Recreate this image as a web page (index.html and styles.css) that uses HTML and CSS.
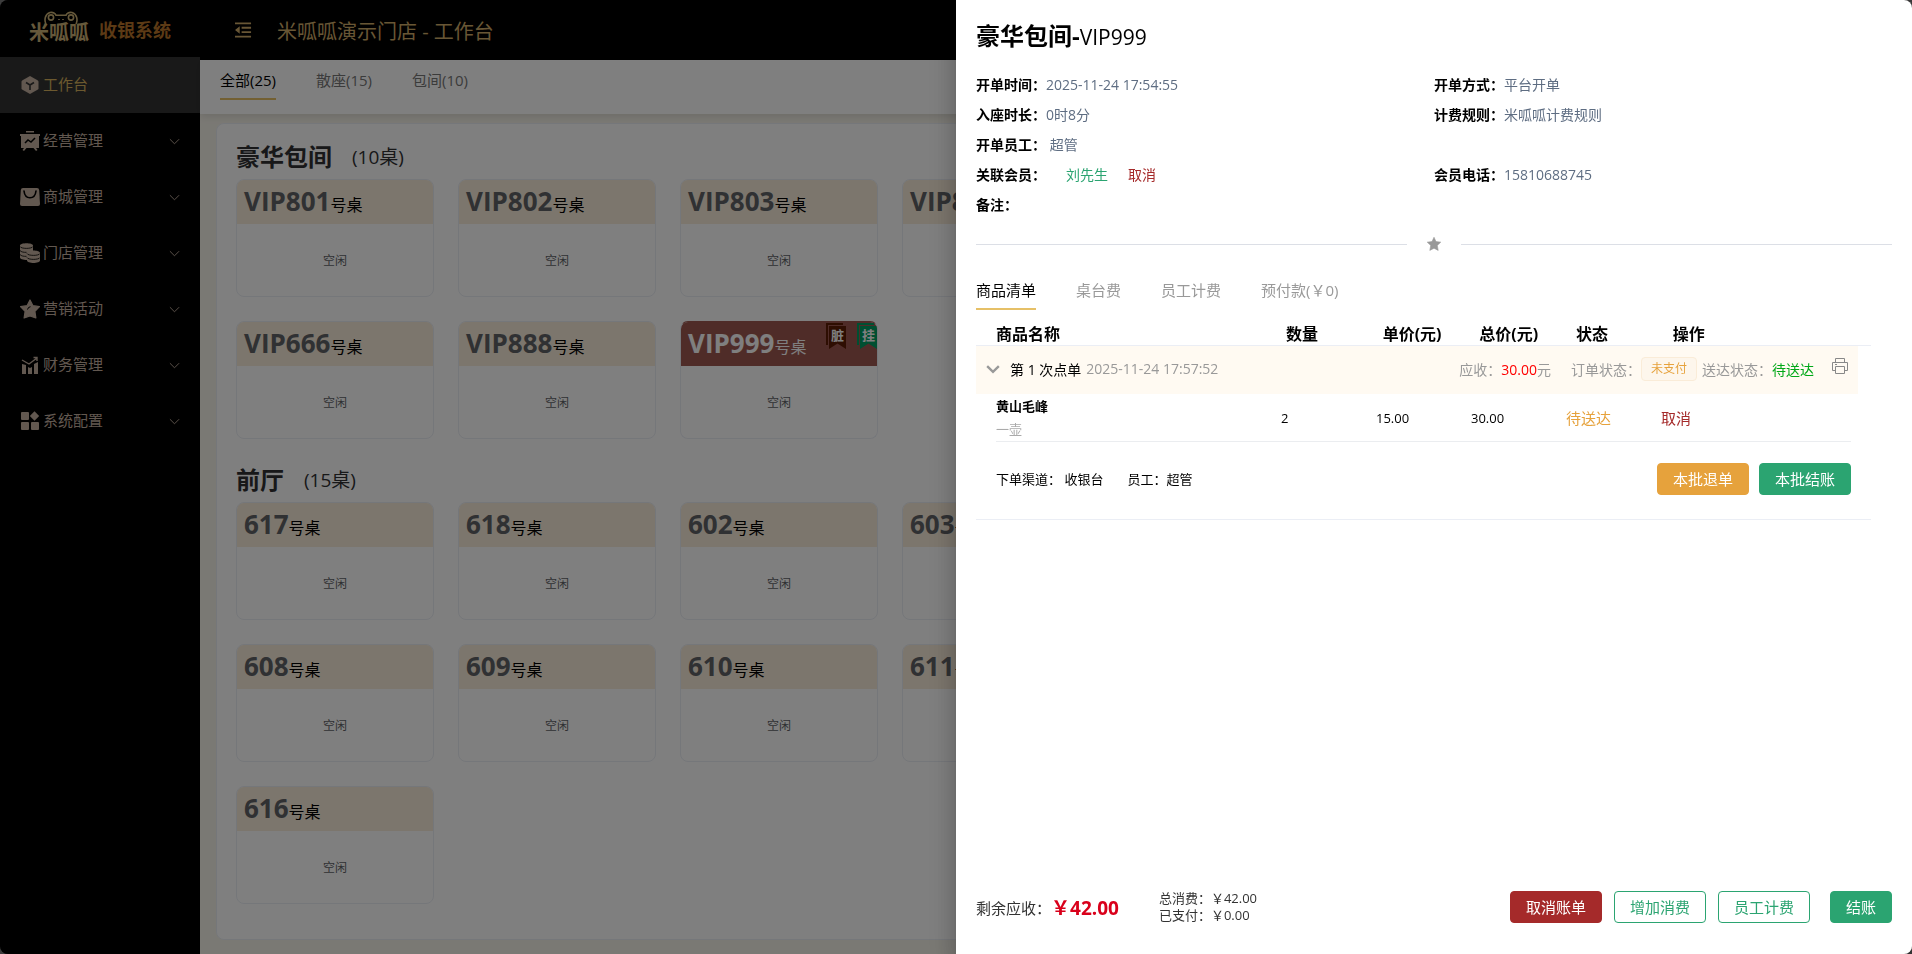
FILE: index.html
```
<!doctype html>
<html lang="zh-CN">

<head>
    <meta charset="UTF-8">
    <title>米呱呱收银系统 - 工作台</title>
    <link rel="stylesheet" href="styles.css">
</head>

<body>

    <svg class="sprite" aria-hidden="true">
        <symbol id="i-down" viewBox="0 0 12 12"><path d="M1 3.5l5 5 5-5" fill="none" stroke="currentColor"/></symbol>
        <symbol id="i-star" viewBox="0 0 12 12"><path d="M6 .2l1.7 3.7 4.1.5-3 2.8.8 4.3L6 9.6l-3.6 1.9.8-4.3-3-2.8 4.1-.5z" fill="currentColor" stroke="currentColor" stroke-width=".5" stroke-linejoin="round"/></symbol>
    </svg>

    <div class="app">

        <aside class="sidebar">
            <div class="logo">
                <span class="logo-mark">米呱呱
                    <svg class="frog" viewBox="0 0 34 14" fill="none" stroke="currentColor" stroke-width="1.6">
                        <path d="M2 13C0 9 1 3 6 1.600c3-.8 5.500 1 6 2.600h10c.5-1.600 3-3.400 6-2.600 5 1.400 6 7.400 4 11.400"/>
                        <circle cx="7" cy="6.500" r="2.600"/>
                        <circle cx="27" cy="6.500" r="2.600"/>
                        <path d="M15 8v1M19 8v1"/>
                    </svg>
                </span>
                <span class="logo-name">收银系统</span>
            </div>

            <nav class="menu">
                <a href="#" class="menu-item active">
                    <svg viewBox="0 0 20 20"><path d="M10 1l7.500 4.200q1 .6 1 1.600v6.400q0 1-1 1.600L10 19l-7.500-4.200q-1-.6-1-1.600V6.800q0-1 1-1.600z" fill="currentColor"/><path d="M6 7.500l4 2.500 4-2.500M10 10v5" fill="none" stroke="#333" stroke-width="1.600"/></svg>
                    <span>工作台</span>
                </a>
                <a href="#" class="menu-item">
                    <svg viewBox="0 0 20 20"><path d="M6 0h8v1.500H6zM0 3h20v2h-1v12h-3l1.500 2-1.500 1-2.500-3h-7L4 20l-1.500-1L4 17H1V5H0z" fill="currentColor"/><path d="M5 12l3-3 3 2 4-4" fill="none" stroke="#000" stroke-width="1.500"/></svg>
                    <span>经营管理</span>
                    <svg class="arrow"><use href="#i-down"/></svg>
                </a>
                <a href="#" class="menu-item">
                    <svg viewBox="0 0 20 20"><path d="M3 1h14q2 0 2.200 2L20 17q0 2-2 2H2q-2 0-2-2L.8 3Q1 1 3 1z" fill="currentColor"/><path d="M4 4c1 9 11 9 12 0" fill="none" stroke="#000" stroke-width="1.600" stroke-linecap="round"/></svg>
                    <span>商城管理</span>
                    <svg class="arrow"><use href="#i-down"/></svg>
                </a>
                <a href="#" class="menu-item">
                    <svg viewBox="0 0 20 20"><path d="M0 2.500C0-.5 13-.5 13 2.500V8l-6 3v6c-4 0-7-1-7-2.500z" fill="currentColor"/><path d="M0 3.500c1 2.500 12 2.500 13 0M0 7.500c1 1.500 4 2 6.500 1.800M0 11.500c1 1.500 4 2 6.500 1.800" fill="none" stroke="#000" stroke-width=".8"/><path d="M7 10c0-3.500 13-3.500 13 0v7.500c0 3.300-13 3.300-13 0z" fill="currentColor"/><path d="M7 10.500c1 2.500 12 2.500 13 0M7 14.500c1 2.500 12 2.500 13 0" fill="none" stroke="#000" stroke-width=".8"/></svg>
                    <span>门店管理</span>
                    <svg class="arrow"><use href="#i-down"/></svg>
                </a>
                <a href="#" class="menu-item">
                    <svg viewBox="0 0 20 20"><path d="M10 1l3 5.700 6.500 1-4.600 4.700 1 6.600L10 17l-5.900 2 1-6.600L.5 7.700l6.500-1z" fill="currentColor" stroke="currentColor" stroke-width="1.200" stroke-linejoin="round"/><path d="M7.500 10.500q.5-2.500 3-2.800" fill="none" stroke="#000"/></svg>
                    <span>营销活动</span>
                    <svg class="arrow"><use href="#i-down"/></svg>
                </a>
                <a href="#" class="menu-item">
                    <svg viewBox="0 0 20 20"><path d="M2 9l4 1v9H2zM8 12l2 1 2-1v7H8zM14 9l4-2v12h-4z" fill="currentColor"/><path d="M2 5l7 4 8-6M13.500 2.500H17V6" fill="none" stroke="currentColor" stroke-width="1.400"/></svg>
                    <span>财务管理</span>
                    <svg class="arrow"><use href="#i-down"/></svg>
                </a>
                <a href="#" class="menu-item">
                    <svg viewBox="0 0 20 20" fill="currentColor"><rect x="1" y="1" width="8" height="8" rx="1"/><rect x="1" y="11" width="8" height="8" rx="1"/><rect x="11" y="11" width="8" height="8" rx="1"/><path d="M14.500.3l4.700 4.700-4.700 4.700L9.800 5z"/></svg>
                    <span>系统配置</span>
                    <svg class="arrow"><use href="#i-down"/></svg>
                </a>
            </nav>
        </aside>

        <div class="main">

            <header class="topbar">
                <svg class="fold" viewBox="0 0 18 18" fill="currentColor"><path d="M0 1h17v2H0zM7 5.600h10v2H7zM7 10.200h10v2H7zM0 15h17v2H0zM5 5v8L0 9z"/></svg>
                <span>米呱呱演示门店 - 工作台</span>
            </header>

            <nav class="tabs room-tabs">
                <a href="#" class="active">全部(25)</a>
                <a href="#">散座(15)</a>
                <a href="#">包间(10)</a>
            </nav>

            <div class="board">

                <section>
                    <h2>豪华包间 <small>(10桌)</small></h2>
                    <div class="desks">
                        <div class="desk"><div class="desk-head"><b>VIP801</b>号桌</div><div class="desk-body">空闲</div></div>
                        <div class="desk"><div class="desk-head"><b>VIP802</b>号桌</div><div class="desk-body">空闲</div></div>
                        <div class="desk"><div class="desk-head"><b>VIP803</b>号桌</div><div class="desk-body">空闲</div></div>
                        <div class="desk"><div class="desk-head"><b>VIP804</b>号桌</div><div class="desk-body">空闲</div></div>
                        <div class="desk"><div class="desk-head"><b>VIP666</b>号桌</div><div class="desk-body">空闲</div></div>
                        <div class="desk"><div class="desk-head"><b>VIP888</b>号桌</div><div class="desk-body">空闲</div></div>
                        <div class="desk busy">
                            <div class="desk-head"><b>VIP999</b>号桌</div>
                            <div class="desk-body">空闲</div>
                            <div class="flags">
                                <span class="flag dirty">脏</span>
                                <span class="flag hold">挂</span>
                            </div>
                        </div>
                    </div>
                </section>

                <section>
                    <h2>前厅 <small>(15桌)</small></h2>
                    <div class="desks">
                        <div class="desk"><div class="desk-head"><b>617</b>号桌</div><div class="desk-body">空闲</div></div>
                        <div class="desk"><div class="desk-head"><b>618</b>号桌</div><div class="desk-body">空闲</div></div>
                        <div class="desk"><div class="desk-head"><b>602</b>号桌</div><div class="desk-body">空闲</div></div>
                        <div class="desk"><div class="desk-head"><b>603</b>号桌</div><div class="desk-body">空闲</div></div>
                        <div class="desk"><div class="desk-head"><b>608</b>号桌</div><div class="desk-body">空闲</div></div>
                        <div class="desk"><div class="desk-head"><b>609</b>号桌</div><div class="desk-body">空闲</div></div>
                        <div class="desk"><div class="desk-head"><b>610</b>号桌</div><div class="desk-body">空闲</div></div>
                        <div class="desk"><div class="desk-head"><b>611</b>号桌</div><div class="desk-body">空闲</div></div>
                        <div class="desk"><div class="desk-head"><b>616</b>号桌</div><div class="desk-body">空闲</div></div>
                    </div>
                </section>

            </div>
        </div>
    </div>

    <div class="mask"></div>

    <div class="drawer" role="dialog" aria-labelledby="drawer-title">

        <h1 id="drawer-title">豪华包间-<span>VIP999</span></h1>

        <dl class="info">
            <div><dt>开单时间：</dt><dd>2025-11-24 17:54:55</dd></div>
            <div><dt>开单方式：</dt><dd>平台开单</dd></div>
            <div><dt>入座时长：</dt><dd>0时8分</dd></div>
            <div><dt>计费规则：</dt><dd>米呱呱计费规则</dd></div>
            <div class="wide"><dt>开单员工：</dt><dd>&nbsp;超管</dd></div>
            <div><dt>关联会员：</dt><dd class="member"><a href="#" class="green">刘先生</a><a href="#" class="red">取消</a></dd></div>
            <div><dt>会员电话：</dt><dd>15810688745</dd></div>
            <div class="wide"><dt>备注：</dt><dd></dd></div>
        </dl>

        <div class="divider"><svg><use href="#i-star"/></svg></div>

        <nav class="tabs bill-tabs">
            <a href="#" class="active">商品清单</a>
            <a href="#">桌台费</a>
            <a href="#">员工计费</a>
            <a href="#">预付款(￥0)</a>
        </nav>

        <table class="goods">
            <thead>
                <tr><th>商品名称</th><th>数量</th><th>单价(元)</th><th>总价(元)</th><th>状态</th><th>操作</th></tr>
            </thead>
            <tbody>
                <tr class="batch">
                    <td colspan="6">
                        <svg class="arrow"><use href="#i-down"/></svg>
                        <span class="batch-no">第 1 次点单</span>
                        <span class="batch-time">2025-11-24 17:57:52</span>
                        <span class="batch-due">应收：<em>30.00</em>元</span>
                        <span>订单状态：</span>
                        <span class="tag">未支付</span>
                        <span>送达状态：</span>
                        <span class="sent">待送达</span>
                        <button type="button" class="print" aria-label="打印">
                            <svg viewBox="0 0 16 16" fill="none" stroke="currentColor"><path d="M3.500 4.500v-4h9v4M3.500 12.500h-3v-8h15v8h-3M3.500 8.500h9v7h-9zM3 6.500h2"/></svg>
                        </button>
                    </td>
                </tr>
                <tr class="item">
                    <td><b>黄山毛峰</b><small>一壶</small></td>
                    <td>2</td>
                    <td>15.00</td>
                    <td>30.00</td>
                    <td class="state">待送达</td>
                    <td class="act"><a href="#" class="red">取消</a></td>
                </tr>
            </tbody>
            <tfoot>
                <tr>
                    <td colspan="6">
                        <span>下单渠道：&nbsp;收银台</span>
                        <span>员工：超管</span>
                        <div class="batch-btns">
                            <button type="button" class="btn btn-orange">本批退单</button>
                            <button type="button" class="btn btn-green">本批结账</button>
                        </div>
                    </td>
                </tr>
            </tfoot>
        </table>

        <footer class="pay">
            <span class="rest">剩余应收：</span>
            <strong>￥42.00</strong>
            <div class="sums">
                <div>总消费：￥42.00</div>
                <div>已支付：￥0.00</div>
            </div>
            <div class="pay-btns">
                <button type="button" class="btn btn-red">取消账单</button>
                <button type="button" class="btn btn-line">增加消费</button>
                <button type="button" class="btn btn-line">员工计费</button>
                <button type="button" class="btn btn-green checkout">结账</button>
            </div>
        </footer>

    </div>

</body>

</html>
```
FILE: styles.css
```
* {
    box-sizing: border-box;
}

html {
    background: #3c3c3c;
}

body {
    margin: 0;
    font-family: "Open Sans", "Noto Sans CJK SC", sans-serif;
    font-size: 14px;
    color: #000;
}

a {
    color: inherit;
    text-decoration: none;
}

h1, h2, dl, dd {
    margin: 0;
}

.sprite {
    display: none;
}

.green { color: #2ba471; }
.red { color: #a52a2a; }

/* page */
.app {
    display: flex;
    min-height: 100vh;
    border-radius: 8px;
    overflow: hidden;
}

.sidebar {
    flex: none;
    width: 200px;
    background: #000;
}

.logo {
    display: flex;
    align-items: center;
    gap: 10px;
    height: 57px;
    padding-left: 29px;
}

.logo-mark {
    position: relative;
    padding-top: 8px;
    font-size: 20px;
    line-height: 24px;
    font-weight: bold;
    color: #cdb377;
}

.frog {
    position: absolute;
    top: -2px;
    left: 15px;
    width: 34px;
    height: 14px;
}

.logo-name {
    font-size: 18px;
    font-weight: bold;
    color: #b8742a;
}

.menu-item {
    display: flex;
    align-items: center;
    gap: 3px;
    height: 56px;
    padding: 0 20px;
    font-size: 15px;
    line-height: 20px;
    color: #c4b0a0;
}

.menu-item span {
    padding-bottom: 2px;
}

.menu-item svg {
    width: 20px;
    height: 20px;
}

.menu-item.active {
    background: #333;
}

.menu-item.active span {
    color: #d9b25e;
}

.menu-item .arrow {
    width: 11px;
    height: 11px;
    margin-left: auto;
}

.main {
    flex: 1;
    min-width: 0;
    display: flex;
    flex-direction: column;
    background: #f5f2e9;
}

.topbar {
    display: flex;
    align-items: center;
    gap: 25px;
    height: 60px;
    padding-left: 35px;
    background: #000;
    font-size: 20px;
    color: #d0ac6a;
}

.fold {
    width: 17px;
    height: 18px;
}

.tabs {
    display: flex;
    gap: 40px;
    font-size: 15px;
    line-height: 20px;
}

.tabs a {
    border-bottom: 2px solid transparent;
}

.tabs .active {
    border-color: #e6c067;
    color: #000;
}

.room-tabs {
    height: 54px;
    padding: 10px 20px 0;
    background: #fff;
    box-shadow: 0 2px 8px rgba(0, 0, 0, .12);
    color: #777;
}

.room-tabs a {
    height: 30px;
}

.board {
    flex: 1;
    margin: 9px 16px 14px;
    padding: 10px 19px 30px;
    border: 1px solid #ebeef5;
    border-radius: 8px;
    background: #fff;
    overflow: hidden;
}

.board section + section {
    margin-top: 18px;
}

.board h2 {
    display: flex;
    align-items: center;
    gap: 20px;
    height: 45px;
    padding-bottom: 2px;
    font-size: 24px;
    color: #303133;
}

.board h2 small {
    font-size: 19px;
    font-weight: normal;
}

.desks {
    display: grid;
    grid-template-columns: repeat(4, 198px);
    gap: 24px;
}

.desk {
    position: relative;
    height: 118px;
    border: 1px solid #ebeef5;
    border-radius: 8px;
    overflow: hidden;
}

.desk-head {
    height: 44px;
    padding-left: 7px;
    background: #f8ecda;
    font-size: 16px;
    line-height: 42px;
}

.desk-head b {
    font-size: 26px;
    color: #606266;
}

.desk-body {
    padding-top: 27px;
    font-size: 12px;
    line-height: 20px;
    text-align: center;
    color: #606266;
}

.desk.busy {
    border-top-color: #9e5850;
}

.busy .desk-head {
    background: #9e5850;
    color: #fff;
}

.busy .desk-head b {
    color: #fff;
}

/* ribbons over the corner of a desk */
.flags {
    position: absolute;
    top: 1px;
    right: 0;
    display: flex;
    gap: 11px;
    z-index: 0;
}

.flag {
    position: relative;
    width: 20px;
    height: 26px;
    padding-left: 3px;
    font-size: 13px;
    line-height: 24px;
    font-weight: bold;
    text-align: center;
    color: #fff;
}

.flag::before {
    content: "";
    position: absolute;
    inset: 3px 0 0 3px;
    z-index: -1;
    background: #5c1c04;
    clip-path: polygon(0 0, 100% 0, 100% 100%, 50% 76%, 0 100%);
}

.flag::after {
    content: "";
    position: absolute;
    inset: 0 3px 4px 0;
    border-top: 2px solid #5c1c04;
    border-left: 2px solid #5c1c04;
}

.hold::before {
    background: #009e62;
}

.hold::after {
    border-color: #009e62;
}

.mask {
    position: fixed;
    inset: 0;
    border-radius: 8px;
    background: rgba(0, 0, 0, .5);
}

/* drawer */
.drawer {
    position: fixed;
    top: 0;
    right: 0;
    bottom: 0;
    width: 50%;
    display: flex;
    flex-direction: column;
    padding: 20px;
    border-radius: 0 8px 8px 0;
    background: #fff;
    box-shadow: 0 8px 10px -5px rgba(0, 0, 0, .2), 0 16px 24px 2px rgba(0, 0, 0, .14), 0 6px 30px 5px rgba(0, 0, 0, .12);
}

.drawer h1 {
    font-size: 24px;
    line-height: 32px;
}

.drawer h1 span {
    font-size: 21px;
    font-weight: normal;
}

.info {
    display: grid;
    grid-template-columns: 1fr 1fr;
    margin-top: 17px;
    line-height: 30px;
}

.info div {
    display: flex;
}

.info .wide {
    grid-column: 1 / 3;
}

.info dt {
    font-weight: bold;
}

.info dd {
    color: #5e6d82;
}

.info .member {
    display: flex;
    gap: 20px;
    padding-left: 20px;
}

.divider {
    display: flex;
    align-items: center;
    gap: 20px;
    height: 24px;
    margin-top: 12px;
    color: #999;
}

.divider::before,
.divider::after {
    content: "";
    flex: 1;
    height: 1px;
    background: #dcdfe6;
}

.divider svg {
    width: 14px;
    height: 14px;
}

.bill-tabs {
    margin-top: 24px;
    color: #999;
}

.bill-tabs a {
    height: 30px;
}

/* goods list, rows share nine equal parts */
.goods {
    display: block;
    margin: 14px 21px 0 0;
    border-bottom: 1px solid #ebeef5;
}

.goods thead,
.goods tbody,
.goods tfoot {
    display: block;
}

.goods tr {
    display: grid;
    grid-template-columns: 3fr repeat(6, 1fr);
}

.goods th,
.goods td {
    padding: 0;
    text-align: left;
}

.goods thead tr {
    padding: 0 5px 0 20px;
    border-bottom: 1px solid #ebeef5;
    font-size: 16px;
    line-height: 21px;
}

.goods .batch,
.goods tfoot tr {
    display: block;
}

.goods .batch td {
    display: flex;
    align-items: center;
    height: 48px;
    margin-right: 13px;
    padding: 0 10px 3px;
    background: #fffaf2;
    color: #999;
}

.batch .arrow {
    width: 14px;
    height: 14px;
    stroke-width: 2;
}

.batch-no {
    margin-left: 10px;
    color: #000;
}

.batch-time {
    margin-left: 5px;
}

.batch-due {
    margin: 0 20px 0 auto;
}

.batch-due em {
    font-style: normal;
    color: #f00;
}

.tag {
    width: 56px;
    height: 24px;
    margin-right: 5px;
    border: 1px solid #faecd8;
    border-radius: 4px;
    background: #fdf6ec;
    font-size: 12px;
    line-height: 22px;
    text-align: center;
    color: #e6a23c;
}

.sent {
    color: #00a818;
}

.print {
    align-self: flex-start;
    width: 16px;
    height: 16px;
    margin: 12px 0 0 18px;
    padding: 0;
    border: 0;
    background: none;
    color: #888;
}

.print svg {
    display: block;
}

.goods .item {
    align-items: center;
    height: 48px;
    margin: 0 20px;
    border-bottom: 1px solid #ebedf0;
    font-size: 13px;
}

.item b,
.item small {
    display: block;
    font-size: 13px;
    line-height: 23px;
}

.item small {
    color: #aaa;
}

.item .state,
.item .act {
    font-size: 15px;
}

.item .state {
    color: #e6a23c;
}

.goods tfoot td {
    display: flex;
    align-items: center;
    gap: 24px;
    height: 77px;
    padding: 0 20px 4px;
    font-size: 13px;
}

.batch-btns {
    display: flex;
    gap: 10px;
    margin-left: auto;
}

.btn {
    height: 32px;
    padding: 0 15px;
    border: 1px solid;
    border-radius: 4px;
    font-family: inherit;
    font-size: 15px;
    line-height: 20px;
    color: #fff;
    cursor: pointer;
}

.btn-orange { background: #e6a23c; border-color: #e6a23c; }
.btn-green { background: #2ba471; border-color: #2ba471; }
.btn-red { background: #a52a2a; border-color: #a52a2a; }
.btn-line { background: #fff; border-color: #2ba471; color: #2ba471; }

.pay {
    display: flex;
    align-items: center;
    height: 54px;
    margin-top: auto;
    color: #333;
}

.rest {
    font-size: 15px;
}

.pay strong {
    font-size: 19px;
    color: #d9001b;
}

.sums {
    margin-left: 40px;
    font-size: 13px;
    line-height: 17px;
}

.pay-btns {
    display: flex;
    gap: 12px;
    margin-left: auto;
}

.checkout {
    margin-left: 8px;
}
```
